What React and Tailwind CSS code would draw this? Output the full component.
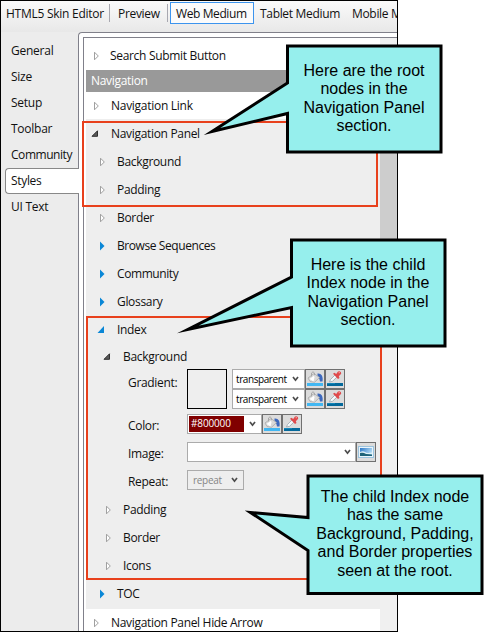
import React from "react";

const Arrow = ({ kind }) => (
  <svg width="10" height="12" viewBox="0 0 10 12" className="shrink-0">
    {kind === "closed" && <path d="M2.5 2.2 L6.3 6 L2.5 9.8 Z" fill="#fff" stroke="#a0a0a0" />}
    {kind === "blue" && <path d="M2 1.5 L6.5 6 L2 10.5 Z" fill="#0a87d6" />}
    {kind === "open" && <path d="M6.5 2.8 V8.3 H1 Z" fill="#595959" stroke="#303030" />}
    {kind === "openBlue" && <path d="M7 2 V9 H0.5 Z" fill="#0a87d6" />}
  </svg>
);

const Row = ({ kind, label, box, text }) => (
  <div className={`flex items-center ${box}`}>
    <Arrow kind={kind} />
    <span className={`whitespace-pre ${text}`}>{label}</span>
  </div>
);

const Chevron = () => (
  <svg width="7" height="7" viewBox="0 0 7 7" className="shrink-0">
    <path d="M1 1 L3.5 4.2 L6 1" fill="none" stroke="#4c4c4c" strokeWidth="1.7" />
  </svg>
);

const Bucket = () => (
  <div className="h-[20px] w-[20px] shrink-0 border border-[#707070] bg-[#dcdcdc]">
    <svg width="18" height="18" viewBox="0 0 18 18">
      <path d="M11.500 3.500 C15 3 17.500 6 16.500 11.500 H14 C13.500 9 13 7 11.500 6.500 Z" fill="#3d68bd" />
      <path d="M2 8 L8 3.500 L13.500 7.500 L8.500 12.300 L4 11.500 Z" fill="#d9d9d9" stroke="#aaa" strokeWidth="0.8" />
      <path d="M5.500 6.500 V3 Q7 0.500 8.500 3 V7" fill="none" stroke="#a8a8a8" />
      <path d="M3.500 9 L9 5 L7.500 11.500 Z" fill="#fff" />
      <rect x="1" y="13" width="16" height="3" fill="#42b7f2" />
    </svg>
  </div>
);

const Dropper = () => (
  <div className="h-[20px] w-[20px] shrink-0 border border-[#707070] bg-[#dcdcdc]">
    <svg width="18" height="18" viewBox="0 0 18 18">
      <path d="M3.500 12 L4.500 9.500 L9 5 L11 7 L6.500 11.300 Z" fill="#f5fafc" stroke="#98a4ac" strokeWidth="0.8" />
      <path d="M7 3.800 L8.500 2.800 L10.200 4 L12 1.500 Q15.500 0.500 15.200 3.800 L12.800 6.300 L13.500 8 L12 9 Z" fill="#e04a4c" />
      <path d="M12 3 L14 1.800 L14 3.200 Z" fill="#f59c98" />
      <rect x="1" y="13" width="16" height="3" fill="#04699b" />
      <rect x="1" y="13" width="8" height="1" fill="#1487b9" />
    </svg>
  </div>
);

const Picture = () => (
  <div className="h-[20px] w-[20px] shrink-0 border border-[#707070] bg-[#dcdcdc]">
    <svg width="18" height="18" viewBox="0 0 18 18">
      <defs>
        <linearGradient id="sky" x1="0" y1="0" x2="1" y2="0.5">
          <stop offset="0" stopColor="#2c78c8" />
          <stop offset="1" stopColor="#b4dcf4" />
        </linearGradient>
      </defs>
      <rect x="1.5" y="3.5" width="15" height="11" fill="#e9f4fb" stroke="#9cc3dd" />
      <rect x="3" y="5" width="12" height="8" fill="url(#sky)" />
      <path d="M3 9 Q6 7.5 8 9 T15 9.5 V11 H3 Z" fill="#dceff6" />
      <path d="M3 10 Q6 9 9 11 L15 11.5 V13 H3 Z" fill="#1e6378" />
    </svg>
  </div>
);

const GradientStop = () => (
  <div className="flex h-[20px]">
    <div className="flex h-[20px] w-[73px] items-center justify-between border border-[#ababab] bg-white pl-[3px] pr-[5px]">
      <span className="text-[10px] leading-none tracking-[-0.42px] text-black">transparent</span>
      <Chevron />
    </div>
    <Bucket />
    <Dropper />
  </div>
);

const tabs = ["General", "Size", "Setup", "Toolbar", "Community", "Styles", "UI Text"];

const Callout = ({ place, width, height, path, textBox, lines }) => (
  <div className={`absolute ${place}`}>
    <svg width={width} height={height} className="block">
      <path d={path} fill="#96efed" stroke="#000" strokeWidth="3" strokeLinejoin="miter" strokeMiterlimit="12" />
    </svg>
    <div className={`absolute text-center font-['Liberation_Sans',Arial,sans-serif] text-[16px] leading-[18.4px] tracking-normal text-black ${textBox}`}>
      {lines.map((l) => (
        <div key={l} className="whitespace-nowrap">{l}</div>
      ))}
    </div>
  </div>
);

export default function App() {
  return (
    <div className="relative h-[632px] w-[492px] overflow-hidden bg-white font-['Open_Sans','Noto_Sans',sans-serif] text-[12px] leading-[16px] tracking-[-0.32px] text-[#111]">
      <div className="flex h-[632px] w-[398px] flex-col overflow-hidden border border-black bg-[#ececec]">
        <div className="flex h-[31px] shrink-0 items-start bg-linear-to-b from-[#fafafa] to-[#e8e8e8] pt-px whitespace-nowrap">
          <span className="w-[108px] shrink-0 pt-[4px] pl-[5px] tracking-[-0.26px]">HTML5 Skin Editor</span>
          <div className="mt-[2px] h-[18px] w-px shrink-0 bg-[#a8a8b0]" />
          <span className="w-[57px] shrink-0 pt-[4px] pl-[8px]">Preview</span>
          <div className="mt-[2px] h-[18px] w-px shrink-0 bg-[#a8a8b0]" />
          <div className="ml-[2px] h-[22px] w-[84px] shrink-0 border border-[#3c94ee] bg-[#fbfbfb] pt-[3px] pl-[5px] tracking-[-0.4px]">Web Medium</div>
          <span className="w-[91px] shrink-0 pt-[4px] pl-[6px]">Tablet Medium</span>
          <span className="shrink-0 pt-[4px] pl-[7px]">Mobile Medium</span>
        </div>
        <div className="flex min-h-0 flex-1">
          <div className="z-10 flex w-[78px] shrink-0 flex-col pt-[6px]">
            {tabs.map((name) => (
              <div
                key={name}
                className={
                  name === "Styles"
                    ? "ml-[4px] flex h-[26px] w-[74px] items-center rounded-l-[4px] border border-r-0 border-[#888] bg-white pl-[5px]"
                    : name === "Community"
                      ? "flex h-[26px] items-center pl-[10px] tracking-[-0.45px]"
                      : "flex h-[26px] items-center pl-[10px] tracking-[-0.25px]"
                }
              >
                {name}
              </div>
            ))}
          </div>
          <div className="-ml-px flex min-w-0 flex-1 rounded-tl-[4px] border-t border-l border-[#80808a] bg-white pt-[4px] pl-[4px]">
            <div className="flex min-w-0 flex-1 border-t border-l border-[#80808a]">
              <div className="flex w-[296px] shrink-0 flex-col overflow-hidden pl-[2px]">
                <Row kind="closed" label="Search Submit Button" box="h-[32px] shrink-0 pt-[4px] pl-[6px]" text="pl-[8px]" />
                <div className="flex h-[22px] shrink-0 items-center bg-[#999] pl-[5px] text-white">Navigation</div>
                <Row kind="closed" label="Navigation Link" box="h-[27px] shrink-0 pl-[6px]" text="pl-[9px] tracking-[-0.28px]" />
                <div className="flex h-[490px] shrink-0 flex-col bg-[#eee] pt-px">
                  <Row kind="open" label="Navigation Panel" box="h-[28px] pl-[5px]" text="pl-[10px]" />
                  <Row kind="closed" label="Background" box="h-[28px] pl-[12px]" text="pl-[9px]" />
                  <Row kind="closed" label="Padding" box="h-[28px] pl-[12px]" text="pl-[9px]" />
                  <Row kind="closed" label="Border" box="h-[28px] pl-[12px]" text="pl-[9px]" />
                  <Row kind="blue" label="Browse Sequences" box="h-[28px] pl-[12px]" text="pl-[9px] tracking-[-0.42px]" />
                  <Row kind="blue" label="Community" box="h-[28px] pl-[12px]" text="pl-[9px] tracking-[-0.42px]" />
                  <Row kind="blue" label="Glossary" box="h-[28px] pl-[12px]" text="pl-[9px]" />
                  <Row kind="openBlue" label="Index" box="h-[28px] pl-[11px]" text="pl-[10px]" />
                  <Row kind="open" label="Background" box="h-[25px] pl-[17px]" text="pl-[10px]" />
                  <div className="flex h-[45px] items-start pl-[42px]">
                    <span className="w-[59px] pt-[6px]">Gradient:</span>
                    <div className="h-[40px] w-[40px] border border-black" />
                    <div className="ml-[5px] flex flex-col">
                      <GradientStop />
                      <GradientStop />
                    </div>
                  </div>
                  <div className="flex h-[28px] items-start pl-[42px]">
                    <span className="w-[59px] pt-[4px]">Color:</span>
                    <div className="flex h-[20px] w-[75px] items-center border border-[#ababab] bg-white pl-px">
                      <span className="mr-[5px] h-[16px] w-[55px] bg-[#800000] pl-[2px] text-[10px] leading-[15px] tracking-[-0.15px] text-white">#800000</span>
                      <Chevron />
                    </div>
                    <Bucket />
                    <Dropper />
                  </div>
                  <div className="flex h-[28px] items-start pl-[42px]">
                    <span className="w-[59px] pt-[4px]">Image:</span>
                    <div className="flex h-[20px] w-[169px] items-center justify-end border border-[#ababab] bg-white pr-[4px]">
                      <Chevron />
                    </div>
                    <Picture />
                  </div>
                  <div className="flex h-[25px] items-start pl-[42px]">
                    <span className="w-[59px] pt-[4px]">Repeat:</span>
                    <div className="flex h-[20px] w-[57px] items-center justify-between border border-[#ababab] pr-[5px] pl-[5px]">
                      <span className="text-[10px] leading-none tracking-[-0.3px] text-[#858585]">repeat</span>
                      <Chevron />
                    </div>
                  </div>
                  <Row kind="closed" label="Padding" box="h-[28px] mt-px pl-[18px]" text="pl-[9px]" />
                  <Row kind="closed" label="Border" box="h-[28px] pl-[18px]" text="pl-[9px]" />
                  <Row kind="closed" label="Icons" box="h-[28px] pl-[18px]" text="pl-[9px]" />
                  <Row kind="blue" label="TOC" box="h-[28px] pl-[12px]" text="pl-[9px]" />
                </div>
                <Row kind="closed" label="Navigation Panel Hide Arrow" box="h-[28px] shrink-0 pl-[6px]" text="pl-[9px]" />
              </div>
              <div className="flex-1 bg-[#f0f0f0] pt-[17px]">
                <div className="h-[220px] bg-[#cdcdcd]" />
              </div>
            </div>
          </div>
        </div>
      </div>

      <div className="absolute top-[121px] left-[82px] z-10 h-[86px] w-[296px] border-2 border-[#e8401c]" />
      <div className="absolute top-[316px] left-[86px] z-10 h-[264px] w-[296px] border-2 border-[#e8401c]" />

      <div className="absolute inset-0 z-20">
        <Callout
          place="top-[40px] left-[200px]"
          width={250}
          height={120}
          path="M87.5 6 H241 V112 H87.5 V73.5 L12 91.5 L87.5 43 Z"
          textBox="top-[22px] left-[87px] w-[154px]"
          lines={["Here are the root", "nodes in the", "Navigation Panel", "section."]}
        />
        <Callout
          place="top-[230px] left-[170px]"
          width={280}
          height={120}
          path="M121.500 10 H275 V116 H121.500 V77.500 L18 99.500 L121.500 47 Z"
          textBox="top-[26px] left-[121px] w-[154px]"
          lines={["Here is the child", "Index node in the", "Navigation Panel", "section."]}
        />
        <Callout
          place="top-[470px] left-[240px]"
          width={250}
          height={130}
          path="M68 6 H242 V123.500 H68 V80.500 L10.500 42.500 L68 47.500 Z"
          textBox="top-[18px] left-[68px] w-[174px]"
          lines={["The child Index node", "has the same", "Background, Padding,", "and Border properties", "seen at the root."]}
        />
      </div>
    </div>
  );
}
